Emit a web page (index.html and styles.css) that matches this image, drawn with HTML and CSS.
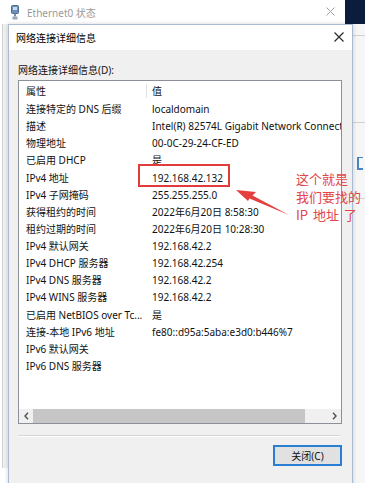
FILE: index.html
```html
<!DOCTYPE html>
<html lang="zh-CN">
<head>
    <meta charset="UTF-8">
    <meta name="viewport" content="width=device-width, initial-scale=1.0">
    <title>网络连接详细信息</title>
    <link rel="stylesheet" href="styles.css">
</head>
<body>
    <div class="desktop">
        <!-- window behind the dialog -->
        <div class="back-window">
            <div class="back-title">
                <svg class="net-icon" width="8" height="15" viewBox="0 0 8 15">
                    <rect x="0.5" y="0.5" width="7" height="8" rx="1" fill="#6f8fb8" stroke="#4a6a94"/>
                    <rect x="2" y="2" width="4" height="3" fill="#c9dbef"/>
                    <rect x="3" y="8.5" width="2" height="3" fill="#7d8da0"/>
                    <rect x="1.5" y="11.5" width="5" height="3" fill="#9aa7b6"/>
                </svg>
                <span class="back-caption">Ethernet0 状态</span>
                <svg class="back-close" width="9" height="9" viewBox="0 0 9 9">
                    <path d="M0.5 0.5 L8.5 8.5 M8.5 0.5 L0.5 8.5" stroke="#a0a0a0" stroke-width="1"/>
                </svg>
            </div>
            <div class="back-body"></div>
        </div>
        <div class="side">
            <div class="side-top"></div>
            <div class="side-body">
                <div class="side-line first"></div>
                <div class="side-line second"></div>
                <div class="side-mark"></div>
                <div class="side-line third"></div>
            </div>
        </div>

        <!-- the details dialog -->
        <div class="dialog">
            <div class="dlg-title">
                <span>网络连接详细信息</span>
                <svg class="dlg-close" width="10" height="10" viewBox="0 0 10 10">
                    <path d="M0.5 0.5 L9.5 9.5 M9.5 0.5 L0.5 9.5" stroke="#2b2b2b" stroke-width="1.2"/>
                </svg>
            </div>
            <div class="dlg-body">
                <div class="dlg-label">网络连接详细信息(D):</div>
                <div class="list">
                    <div class="list-head">
                        <div class="head-name">属性</div>
                        <div class="head-value">值</div>
                    </div>
                    <div class="list-rows">
                        <div class="row"><span class="k">连接特定的 DNS 后缀</span><span class="v">localdomain</span></div>
                        <div class="row"><span class="k">描述</span><span class="v">Intel(R) 82574L Gigabit Network Connection</span></div>
                        <div class="row"><span class="k">物理地址</span><span class="v">00-0C-29-24-CF-ED</span></div>
                        <div class="row"><span class="k">已启用 DHCP</span><span class="v">是</span></div>
                        <div class="row"><span class="k">IPv4 地址</span><span class="v">192.168.42.132</span></div>
                        <div class="row"><span class="k">IPv4 子网掩码</span><span class="v">255.255.255.0</span></div>
                        <div class="row"><span class="k">获得租约的时间</span><span class="v">2022年6月20日 8:58:30</span></div>
                        <div class="row"><span class="k">租约过期的时间</span><span class="v">2022年6月20日 10:28:30</span></div>
                        <div class="row"><span class="k">IPv4 默认网关</span><span class="v">192.168.42.2</span></div>
                        <div class="row"><span class="k">IPv4 DHCP 服务器</span><span class="v">192.168.42.254</span></div>
                        <div class="row"><span class="k">IPv4 DNS 服务器</span><span class="v">192.168.42.2</span></div>
                        <div class="row"><span class="k">IPv4 WINS 服务器</span><span class="v">192.168.42.2</span></div>
                        <div class="row"><span class="k">已启用 NetBIOS over Tc...</span><span class="v">是</span></div>
                        <div class="row"><span class="k">连接-本地 IPv6 地址</span><span class="v">fe80::d95a:5aba:e3d0:b446%7</span></div>
                        <div class="row"><span class="k">IPv6 默认网关</span><span class="v"></span></div>
                        <div class="row"><span class="k">IPv6 DNS 服务器</span><span class="v"></span></div>
                    </div>
                    <div class="hscroll">
                        <div class="sb-btn">
                            <svg width="5" height="8" viewBox="0 0 5 8"><path d="M4 0.8 L1 4 L4 7.2" fill="none" stroke="#505050" stroke-width="1.4"/></svg>
                        </div>
                        <div class="sb-thumb"></div>
                        <div class="sb-track"></div>
                        <div class="sb-btn">
                            <svg width="5" height="8" viewBox="0 0 5 8"><path d="M1 0.8 L4 4 L1 7.2" fill="none" stroke="#505050" stroke-width="1.4"/></svg>
                        </div>
                    </div>
                </div>
                <div class="etched"></div>
                <div class="buttons">
                    <button class="close-btn">关闭(C)</button>
                </div>
            </div>
        </div>

        <!-- annotation drawn over the screenshot -->
        <div class="highlight"></div>
        <svg class="arrow" width="60" height="32" viewBox="230 186 60 32">
            <polygon points="236,190 256,192 252.5,195.5 289,215 249.5,198.5 248,201" fill="#e53e3e"/>
        </svg>
        <div class="note">这个就是<br>我们要找的<br>IP 地址 了</div>
    </div>
</body>
</html>
```

FILE: styles.css
```css
body {
    margin: 0;
    font-family: "Noto Sans", "Noto Sans CJK SC", sans-serif;
    font-size: 10px;
    color: #111;
    background: #fff;
}
.desktop {
    position: relative;
    width: 365px;
    height: 483px;
    overflow: hidden;
    display: flex;
    background: #fff;
}

/* back window */
.back-window {
    width: 345px;
    height: 468px;
    display: flex;
    flex-direction: column;
}
.back-title {
    height: 24px;
    background: #fff;
    display: flex;
    align-items: center;
    padding-left: 11px;
}
.net-icon {
    margin-right: 8px;
}
.back-caption {
    color: #9a9a9a;
    flex: 1;
}
.back-close {
    margin-right: 10px;
    margin-top: -1px;
}
.back-body {
    flex: 1;
    background: #f0f0f0;
    border-left: 1px solid #d0d0d0;
    margin-left: 2px;
}
.side {
    width: 20px;
    display: flex;
    flex-direction: column;
}
.side-top {
    height: 24px;
    background: #0b1c3d;
}
.side-body {
    flex: 1;
    background: #f6f6f6;
}
.side-line {
    height: 1px;
    background: #d2d2d2;
}
.side-line.first {
    margin-top: 11px;
}
.side-line.second {
    margin-top: 86px;
}
.side-mark {
    margin: 34px 0 0 12px;
    width: 4px;
    height: 10px;
    border-left: 2px solid #4a82c6;
    border-top: 1px solid #4a82c6;
    border-bottom: 2px solid #4a82c6;
}
.side-line.third {
    margin-top: 28px;
}

/* dialog */
.dialog {
    position: absolute;
    left: 8px;
    top: 24px;
    width: 345px;
    height: 470px;
    box-sizing: border-box;
    border: 1px solid #a9bbd0;
    box-shadow: 0 0 4px rgba(0, 0, 0, 0.18);
    background: #f0f0f0;
}
.dlg-title {
    height: 25px;
    background: #fff;
    display: flex;
    align-items: center;
    justify-content: space-between;
    padding: 0 8px 0 7px;
    color: #000;
}
.dlg-close {
    margin-top: -1px;
}
.dlg-body {
    padding: 0 10px 0 9px;
}
.dlg-label {
    padding-top: 12px;
    line-height: 16px;
    height: 16px;
}
.list {
    margin-top: 2px;
    height: 344px;
    box-sizing: border-box;
    border: 1px solid #8c9099;
    background: #fff;
}
.list-head {
    display: flex;
    height: 20px;
}
.head-name {
    width: 128px;
    box-sizing: border-box;
    margin: 3px 0;
    line-height: 14px;
    padding-left: 7px;
    border-right: 1px solid #e3e3e3;
}
.head-value {
    line-height: 20px;
    padding-left: 5px;
}
.list-rows {
    height: 308px;
    overflow: hidden;
}
.row {
    display: flex;
    height: 17.13px;
    line-height: 17.13px;
    white-space: nowrap;
}
.k {
    width: 128px;
    flex-shrink: 0;
    box-sizing: border-box;
    padding-left: 7px;
    overflow: hidden;
}
.v {
    padding-left: 5px;
}
.hscroll {
    display: flex;
    height: 14px;
    background: #f0f0f0;
}
.sb-btn {
    width: 14px;
    display: flex;
    align-items: center;
    justify-content: center;
}
.sb-thumb {
    width: 272px;
    background: #c6c6c6;
}
.sb-track {
    flex: 1;
}
.etched {
    margin-top: 11px;
    height: 1px;
    border-top: 1px solid #d5d5d5;
    background: #fff;
    margin-right: 2px;
}
.buttons {
    display: flex;
    justify-content: flex-end;
    margin-top: 8px;
}
.close-btn {
    width: 69px;
    height: 21px;
    box-sizing: border-box;
    border: 2px solid #2a7fd4;
    background: #e1e1e1;
    font-family: "Noto Sans", "Noto Sans CJK SC", sans-serif;
    font-size: 10px;
    color: #111;
    padding: 0;
}

/* annotation */
.highlight {
    position: absolute;
    left: 138px;
    top: 164px;
    width: 92px;
    height: 23px;
    box-sizing: border-box;
    border: 2px solid #e13b3b;
}
.arrow {
    position: absolute;
    left: 230px;
    top: 186px;
}
.note {
    position: absolute;
    left: 296px;
    top: 170px;
    font-family: "Noto Sans CJK SC", sans-serif;
    font-size: 13px;
    line-height: 18px;
    color: #e3444a;
    white-space: nowrap;
    word-spacing: 2px;
}
```
